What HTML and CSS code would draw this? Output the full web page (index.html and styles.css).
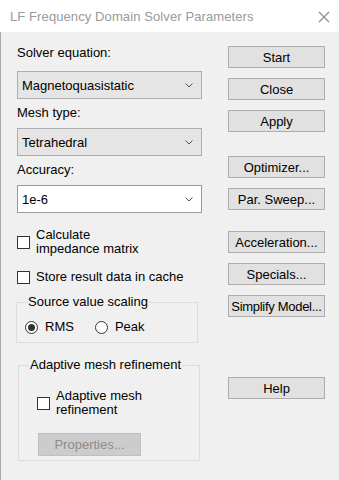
FILE: index.html
```html
<!DOCTYPE html>
<html lang="en">
<head>
    <meta charset="UTF-8">
    <title>LF Frequency Domain Solver Parameters</title>
    <link rel="stylesheet" href="styles.css">
</head>
<body>
    <div class="titlebar">
        <span class="title">LF Frequency Domain Solver Parameters</span>
        <svg class="close" width="12" height="12" viewBox="0 0 12 12">
            <path d="M1 1 L11 11 M11 1 L1 11" stroke="#8a8a8a" stroke-width="1.1" fill="none"/>
        </svg>
    </div>

    <div class="client">
        <!-- left side: settings -->
        <div class="settings">
            <div class="label first">Solver equation:</div>
            <div class="combo">
                <span>Magnetoquasistatic</span>
                <svg class="chevron" width="8" height="5" viewBox="0 0 8 5"><path d="M0.5 0.5 L4 4 L7.5 0.5" stroke="#555" fill="none"/></svg>
            </div>

            <div class="label">Mesh type:</div>
            <div class="combo">
                <span>Tetrahedral</span>
                <svg class="chevron" width="8" height="5" viewBox="0 0 8 5"><path d="M0.5 0.5 L4 4 L7.5 0.5" stroke="#555" fill="none"/></svg>
            </div>

            <div class="label">Accuracy:</div>
            <div class="combo editable">
                <span>1e-6</span>
                <svg class="chevron" width="8" height="5" viewBox="0 0 8 5"><path d="M0.5 0.5 L4 4 L7.5 0.5" stroke="#555" fill="none"/></svg>
            </div>

            <div class="check two-line first-check">
                <span class="box"></span>
                <span>Calculate<br>impedance matrix</span>
            </div>
            <div class="check store">
                <span class="box"></span>
                <span>Store result data in cache</span>
            </div>

            <fieldset class="group scaling">
                <legend>Source value scaling</legend>
                <div class="radios">
                    <span class="radio on"></span><span class="radio-text">RMS</span>
                    <span class="radio"></span><span class="radio-text">Peak</span>
                </div>
            </fieldset>

            <fieldset class="group adaptive">
                <legend>Adaptive mesh refinement</legend>
                <div class="check two-line">
                    <span class="box"></span>
                    <span>Adaptive mesh<br>refinement</span>
                </div>
                <button class="btn disabled">Properties...</button>
            </fieldset>
        </div>

        <!-- right side: buttons -->
        <div class="actions">
            <button class="btn">Start</button>
            <button class="btn">Close</button>
            <button class="btn">Apply</button>
            <button class="btn gap-big">Optimizer...</button>
            <button class="btn">Par. Sweep...</button>
            <button class="btn gap-mid">Acceleration...</button>
            <button class="btn">Specials...</button>
            <button class="btn tight">Simplify Model...</button>
            <button class="btn gap-help">Help</button>
        </div>
    </div>
</body>
</html>
```

FILE: styles.css
```css
/* general */
body {
    margin: 0;
    width: 339px;
    height: 480px;
    overflow: hidden;
    font-family: "Liberation Sans", Arial, sans-serif;
    font-size: 13px;
    color: #000;
    background-color: #f0f0f0;
}

/* window title */
.titlebar {
    height: 32px;
    background-color: #fff;
    display: flex;
    align-items: center;
    justify-content: space-between;
    padding: 0 9px 0 10px;
}

.title {
    color: #9a9a9a;
    font-size: 13px;
    letter-spacing: 0.1px;
}

.close {
    margin-top: 1px;
}

.client {
    height: 448px;
    border-left: 1px solid #a8a8a8;
    display: flex;
    padding-left: 16px;
}

/* left column */
.settings {
    width: 185px;
    display: flex;
    flex-direction: column;
}

.label {
    line-height: 16px;
    margin-top: 6px;
    margin-bottom: 7px;
}

.label.first {
    margin-top: 13px;
    margin-bottom: 10px;
}

.combo {
    height: 26px;
    border: 1px solid #adadad;
    background-color: #e5e5e5;
    display: flex;
    align-items: center;
    justify-content: space-between;
    padding: 0 8px 0 4px;
}

.combo.editable {
    background-color: #fff;
    border-color: #9a9a9a;
}

.check {
    display: flex;
    align-items: center;
    gap: 6px;
    line-height: 14px;
}

.box {
    width: 11px;
    height: 11px;
    border: 1px solid #333;
    background-color: #fff;
    flex-shrink: 0;
}

.first-check {
    margin-top: 15px;
}

.store {
    margin-top: 14px;
}

/* group boxes */
.group {
    margin: 0;
    border: 1px solid #dcdcdc;
    padding: 0 10px;
}

.group legend {
    padding: 0 1px;
    line-height: 16px;
    white-space: nowrap;
}

.scaling {
    margin-top: 10px;
    width: 160px;
    margin-left: -1px;
    padding-bottom: 7px;
}

.radios {
    display: flex;
    align-items: center;
    line-height: 16px;
    margin-top: 9px;
    margin-left: -2px;
}

.radio {
    width: 11px;
    height: 11px;
    border: 1px solid #333;
    border-radius: 50%;
    background-color: #fff;
    display: flex;
    align-items: center;
    justify-content: center;
}

.radio.on::after {
    content: "";
    width: 7px;
    height: 7px;
    border-radius: 50%;
    background-color: #333;
}

.radio-text {
    margin-left: 7px;
    margin-right: 21px;
}

.adaptive {
    margin-top: 14px;
    margin-left: 1px;
    width: 160px;
    height: 102px;
}

.adaptive .check {
    margin-top: 16px;
    margin-left: 8px;
}

/* buttons */
.actions {
    margin-left: 26px;
    width: 97px;
    display: flex;
    flex-direction: column;
    padding-top: 14px;
    gap: 10px;
}

.btn {
    height: 22px;
    width: 97px;
    border: 1px solid #adadad;
    background-color: #e1e1e1;
    font-family: inherit;
    font-size: 13px;
    color: #000;
    padding: 0;
    white-space: nowrap;
}

.btn.tight {
    letter-spacing: -0.3px;
}

.btn.gap-big {
    margin-top: 14px;
}

.btn.gap-mid {
    margin-top: 11px;
}

.btn.gap-help {
    margin-top: 50px;
}

.btn.disabled {
    width: 103px;
    height: 23px;
    margin-top: 16px;
    margin-left: 9px;
    background-color: #cccccc;
    border-color: #bfbfbf;
    color: #8d8d8d;
}
```
